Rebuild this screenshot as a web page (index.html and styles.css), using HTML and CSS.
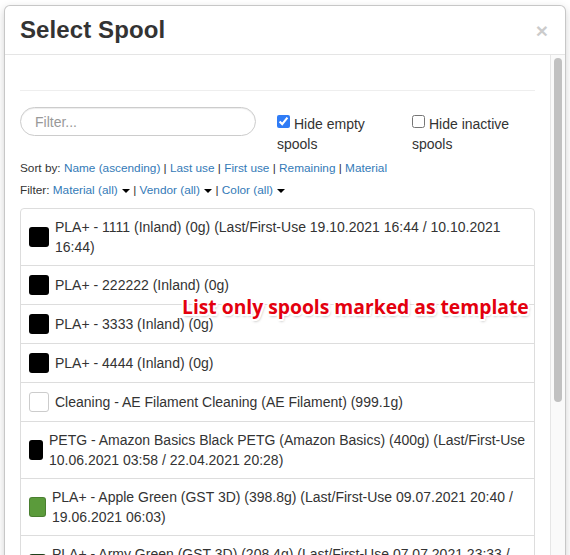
FILE: index.html
```html
<!DOCTYPE html>
<html lang="en">
<head>
<meta charset="utf-8">
<title>Select Spool</title>
<link rel="stylesheet" href="styles.css">
</head>
<body>
<div class="page">
  <div class="modal">
    <div class="modal-header">
      <h4 class="modal-title">Select Spool</h4>
      <button class="close" type="button">×</button>
    </div>
    <div class="modal-scroll">
      <div class="modal-body">
        <hr class="divider">
        <div class="controls">
          <input class="filter-input" type="text" placeholder="Filter...">
          <label class="check"><input type="checkbox" checked>Hide empty spools</label>
          <label class="check"><input type="checkbox">Hide inactive spools</label>
        </div>
        <div class="sort">Sort by: <a href="#">Name (ascending)</a> | <a href="#">Last use</a> | <a href="#">First use</a> | <a href="#">Remaining</a> | <a href="#">Material</a></div>
        <div class="filters">Filter: <a href="#">Material (all)</a> <span class="caret"></span> | <a href="#">Vendor (all)</a> <span class="caret"></span> | <a href="#">Color (all)</a> <span class="caret"></span></div>
        <ul class="spool-list">
          <li class="spool"><span class="swatch swatch--black"></span><span class="spool-text">PLA+ - 1111 (Inland) (0g) (Last/First-Use 19.10.2021 16:44 / 10.10.2021 16:44)</span></li>
          <li class="spool"><span class="swatch swatch--black"></span><span class="spool-text">PLA+ - 222222 (Inland) (0g)</span></li>
          <li class="spool"><span class="swatch swatch--black"></span><span class="spool-text">PLA+ - 3333 (Inland) (0g)</span></li>
          <li class="spool"><span class="swatch swatch--black"></span><span class="spool-text">PLA+ - 4444 (Inland) (0g)</span></li>
          <li class="spool"><span class="swatch swatch--white"></span><span class="spool-text">Cleaning - AE Filament Cleaning (AE Filament) (999.1g)</span></li>
          <li class="spool"><span class="swatch swatch--black swatch--w14"></span><span class="spool-text">PETG - Amazon Basics Black PETG (Amazon Basics) (400g) (Last/First&#8209;Use 10.06.2021 03:58 / 22.04.2021 20:28)</span></li>
          <li class="spool"><span class="swatch swatch--green swatch--w17"></span><span class="spool-text">PLA+ - Apple Green (GST 3D) (398.8g) (Last/First-Use 09.07.2021 20:40 / 19.06.2021 06:03)</span></li>
          <li class="spool"><span class="swatch swatch--army swatch--w17"></span><span class="spool-text">PLA+ - Army Green (GST 3D) (208.4g) (Last/First-Use 07.07.2021 23:33 / 20.06.2021 18:12)</span></li>
        </ul>
      </div>
      <div class="scrollbar"><div class="scrollbar-thumb"></div></div>
    </div>
  </div>
  <div class="annotation">List only spools marked as template</div>
</div>
</body>
</html>
```

FILE: styles.css
```css
html, body {
  margin: 0;
  height: 555px;
  overflow: hidden;
}
body {
  background: #fff;
  font-family: "Liberation Sans", Arial, Helvetica, sans-serif;
  color: #333;
}
.page {
  position: relative;
  padding: 5px 4px 0 4px;
}
.modal {
  width: 562px;
  height: 720px;
  box-sizing: border-box;
  background: #fff;
  border: 1px solid rgba(0, 0, 0, 0.22);
  border-radius: 6px;
  box-shadow: 0 3px 9px rgba(0, 0, 0, 0.18);
  overflow: hidden;
}
.modal-header {
  display: flex;
  align-items: center;
  justify-content: space-between;
  padding: 11px 15px 11px 15px;
  border-bottom: 1px solid #e5e5e5;
}
.modal-title {
  margin: 0;
  font-size: 24px;
  line-height: 26px;
  font-weight: bold;
  color: #333;
  letter-spacing: 0.1px;
}
.close {
  padding: 0;
  margin: 0 2px 0 0;
  border: 0;
  background: none;
  font-family: "Liberation Sans", Arial, sans-serif;
  font-size: 21px;
  line-height: 1;
  font-weight: bold;
  color: #000;
  opacity: 0.2;
}
.modal-scroll {
  display: flex;
}
.modal-body {
  flex: 1;
  min-width: 0;
  padding: 15px;
}
.scrollbar {
  width: 14px;
  flex: none;
  border-left: 1px solid #e6e6e6;
  background: #fafafa;
  height: 700px;
}
.scrollbar-thumb {
  margin: 3px 0 0 3px;
  width: 8px;
  height: 344px;
  border-radius: 4px;
  background: #c1c1c1;
}
.divider {
  margin: 20px 0 16px;
  border: 0;
  border-top: 1px solid #eee;
}
.controls {
  display: grid;
  grid-template-columns: 236px 114px 1fr;
  column-gap: 21px;
  align-items: start;
}
.filter-input {
  width: 100%;
  height: 29px;
  box-sizing: border-box;
  margin: 0;
  padding: 0 14px;
  border: 1px solid #ccc;
  border-radius: 15px;
  box-shadow: inset 0 1px 1px rgba(0, 0, 0, 0.075);
  font-family: "Liberation Sans", Arial, sans-serif;
  font-size: 14px;
  color: #555;
  outline: none;
}
.filter-input::placeholder {
  color: #999;
}
.check {
  margin-top: 7px;
  font-size: 14px;
  line-height: 20px;
  color: #333;
}
.check input {
  width: 13px;
  height: 13px;
  margin: 0 4px 0 0;
  vertical-align: 1px;
  accent-color: #2f7cf6;
}
.sort {
  margin-top: 6px;
  font-size: 11.8px;
  line-height: 17px;
}
.filters {
  margin-top: 5px;
  font-size: 11.8px;
  line-height: 17px;
}
a {
  color: #337ab7;
  text-decoration: none;
}
.caret {
  display: inline-block;
  width: 0;
  height: 0;
  margin-left: 1px;
  vertical-align: middle;
  border-top: 4px solid #000;
  border-left: 4px solid transparent;
  border-right: 4px solid transparent;
}
.spool-list {
  margin: 9px 0 0;
  padding: 0;
  list-style: none;
  border: 1px solid #ddd;
  border-radius: 4px;
}
.spool {
  display: flex;
  align-items: center;
  padding: 8px 3px 8px 8px;
  border-top: 1px solid #ddd;
  font-size: 14px;
  line-height: 20px;
  color: #333;
}
.spool:first-child {
  border-top: 0;
}
.swatch {
  flex: none;
  width: 20px;
  height: 20px;
  margin: 1px 6px 1px 0;
  box-sizing: border-box;
  border: 1px solid rgba(0, 0, 0, 0.18);
  border-radius: 3px;
}
.swatch--w14 { width: 14px; }
.swatch--w17 { width: 17px; }
.swatch--black { background: #000; }
.swatch--white { background: #fff; border-color: #ccc; }
.swatch--green { background: #5b9b3b; }
.swatch--army { background: #234d1f; }
.spool-text {
  min-width: 0;
}
.annotation {
  position: absolute;
  left: 182px;
  top: 293px;
  font-family: "Open Sans", "Noto Sans", sans-serif;
  font-weight: bold;
  font-size: 19.3px;
  line-height: 28px;
  color: #e3000e;
  white-space: nowrap;
  text-shadow: -1.5px -1.5px 0 #fff, 1.5px -1.5px 0 #fff, -1.5px 1.5px 0 #fff, 1.5px 1.5px 0 #fff, 0 -2px 0 #fff, 0 2px 0 #fff, -2px 0 0 #fff, 2px 0 0 #fff, 1px 2px 3px rgba(0, 0, 0, 0.45);
}
```
